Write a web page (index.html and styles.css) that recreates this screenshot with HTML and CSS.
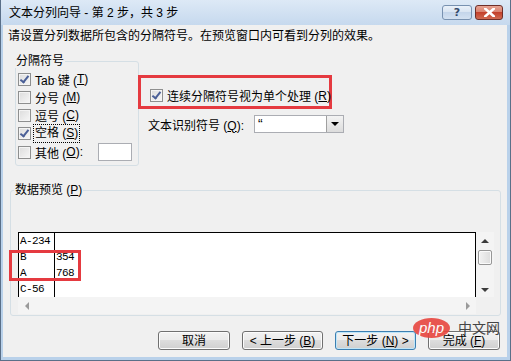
FILE: index.html
```html
<!DOCTYPE html>
<html lang="zh-CN">
<head>
    <meta charset="UTF-8">
    <meta name="viewport" content="width=device-width, initial-scale=1.0">
    <title>文本分列向导</title>
    <link rel="stylesheet" href="styles.css">
</head>
<body>
    <div class="window">
        <div class="titlebar">
            <span class="title">文本分列向导 - 第 2 步，共 3 步</span>
            <div class="caption-buttons">
                <span class="cap-btn help">?</span>
                <span class="cap-btn close">
                    <svg width="11" height="9" viewBox="0 0 11 9">
                        <path d="M1 0.5 L10 8.5 M10 0.5 L1 8.5" stroke="#fff" stroke-width="2.6" stroke-linecap="square"/>
                    </svg>
                </span>
            </div>
        </div>

        <div class="client">
            <p class="intro">请设置分列数据所包含的分隔符号。在预览窗口内可看到分列的效果。</p>

            <div class="options">
                <fieldset class="group delimiters">
                    <legend>分隔符号</legend>
                    <label class="opt"><span class="check on"></span>Tab 键 (<u>T</u>)</label>
                    <label class="opt"><span class="check"></span>分号 (<u>M</u>)</label>
                    <label class="opt"><span class="check"></span>逗号 (<u>C</u>)</label>
                    <label class="opt"><span class="check on"></span><span class="focus">空格 (<u>S</u>)</span></label>
                    <label class="opt other"><span class="check"></span>其他 (<u>O</u>):<span class="textbox"></span></label>
                </fieldset>

                <div class="side">
                    <div class="highlight">
                        <label class="opt"><span class="check on"></span>连续分隔符号视为单个处理 (<u>R</u>)</label>
                    </div>
                    <div class="qualifier">
                        <span class="qualifier-label">文本识别符号 (<u>Q</u>):</span>
                        <div class="combo">
                            <span class="combo-value">“</span>
                            <span class="combo-btn"><span class="tri down"></span></span>
                        </div>
                    </div>
                </div>
            </div>

            <fieldset class="group preview">
                <legend>数据预览 (<u>P</u>)</legend>
                <div class="preview-grid">
                    <div class="sheet">
                        <div class="row"><span class="cell first">A-234</span><span class="cell"></span></div>
                        <div class="row"><span class="cell first">B</span><span class="cell">354</span></div>
                        <div class="row"><span class="cell first">A</span><span class="cell">768</span></div>
                        <div class="row"><span class="cell first">C-56</span><span class="cell"></span></div>
                    </div>
                    <div class="vscroll">
                        <span class="sb-btn"><span class="tri up"></span></span>
                        <span class="thumb"></span>
                        <span class="sb-btn"><span class="tri down"></span></span>
                    </div>
                    <div class="hscroll">
                        <span class="sb-btn"><span class="tri left"></span></span>
                        <span class="sb-btn"><span class="tri right"></span></span>
                    </div>
                    <div class="mark"></div>
                </div>
            </fieldset>

            <div class="buttons">
                <span class="btn narrow">取消</span>
                <span class="btn">&lt; 上一步 (<u>B</u>)</span>
                <span class="btn default">下一步 (<u>N</u>) &gt;</span>
                <span class="btn narrow">完成 (<u>F</u>)</span>
            </div>
        </div>

        <div class="watermark">
            <span class="wm-php">php</span>
            <span class="wm-cn">中文网</span>
        </div>
    </div>
</body>
</html>
```

FILE: styles.css
```css
body {
    margin: 0;
    background: #fff;
    font-family: "Liberation Sans", "Noto Sans CJK SC", sans-serif;
    font-size: 12px;
    color: #000;
}

u {
    text-decoration: underline;
    text-underline-offset: 1px;
}

.window {
    position: relative;
    width: 511px;
    height: 361px;
    box-sizing: border-box;
    display: flex;
    flex-direction: column;
    background: #b9d1ea;
    border: 1px solid #5a6f88;
    border-top: none;
    padding: 0 3px 3px 2px;
}

.titlebar {
    height: 25px;
    margin: 0 -3px 0 -2px;
    display: flex;
    align-items: center;
    justify-content: space-between;
    padding: 0 7px 0 8px;
    background: linear-gradient(#dde9f6, #c6d9ee);
    box-sizing: border-box;
}

.title {
    line-height: 14px;
    padding-top: 1px;
}

.caption-buttons {
    display: flex;
    gap: 3px;
    align-self: flex-start;
    margin-top: 5px;
}

.cap-btn {
    height: 15px;
    box-sizing: border-box;
    border-radius: 3px;
    display: flex;
    align-items: center;
    justify-content: center;
}

.cap-btn.help {
    width: 30px;
    border: 1px solid #7891b0;
    background: linear-gradient(#eaf1f9 0%, #d7e3f1 50%, #c4d5ea 50%, #d3e1f1 100%);
    color: #34496a;
    font-family: "DejaVu Sans", sans-serif;
    font-size: 11px;
    font-weight: bold;
    line-height: 13px;
}

.cap-btn.close {
    width: 28px;
    border: 1px solid #6e2e28;
    background: linear-gradient(#e8a493 0%, #d98270 45%, #c4412c 50%, #d06a52 100%);
}

.client {
    flex: 1;
    background: #f0f0f0;
    padding: 5px 7px 0 5px;
    display: flex;
    flex-direction: column;
}

.intro {
    margin: 0;
    line-height: 13px;
}

.options {
    display: flex;
    margin-top: 11px;
}

.group {
    margin: 0;
    min-width: 0;
    border: 1px solid #d5dfe5;
    border-radius: 3px;
    box-sizing: border-box;
}

.group legend {
    padding: 0 1px;
    line-height: 14px;
}

.delimiters {
    width: 124px;
    margin-left: 7px;
    padding: 2px 0 3px 2px;
}

.delimiters legend {
    margin-left: -3px;
}

.opt {
    display: flex;
    align-items: center;
    height: 18px;
    white-space: nowrap;
}

.opt.other {
    height: 20px;
}

.check {
    position: relative;
    width: 13px;
    height: 13px;
    box-sizing: border-box;
    margin-right: 4px;
    flex: none;
    border: 1px solid #8e8f8f;
    background: linear-gradient(135deg, #dcdcdc, #f7f7f7);
    box-shadow: inset 0 0 0 1px #f4f4f4;
}

.check.on::after {
    content: "";
    position: absolute;
    left: 3px;
    top: 0;
    width: 3px;
    height: 7px;
    border-right: 2px solid #4a5f97;
    border-bottom: 2px solid #4a5f97;
    transform: rotate(38deg);
}

.focus {
    outline: 1px dotted #000;
    outline-offset: 1px;
    line-height: 15px;
}

.textbox {
    width: 34px;
    height: 18px;
    box-sizing: border-box;
    margin-left: auto;
    margin-right: 6px;
    background: #fff;
    border: 1px solid #abadb3;
}

.side {
    margin-top: 21px;
    margin-left: -1px;
}

.highlight {
    width: 194px;
    box-sizing: border-box;
    border: 3px solid #e53a40;
    padding: 11px 0 4px 9px;
}

.highlight .opt {
    height: 13px;
}

.qualifier {
    display: flex;
    align-items: center;
    margin-top: 6px;
    padding-left: 10px;
}

.qualifier-label {
    width: 106px;
}

.combo {
    width: 90px;
    height: 18px;
    box-sizing: border-box;
    display: flex;
    justify-content: space-between;
    background: #fff;
    border: 1px solid #abadb3;
}

.combo-value {
    padding-left: 3px;
    font-size: 14px;
    line-height: 16px;
}

.combo-btn {
    width: 16px;
    display: flex;
    align-items: center;
    justify-content: center;
    border-left: 1px solid #a0a0a0;
    background: linear-gradient(#f3f3f3, #dcdcdc);
}

.tri {
    width: 0;
    height: 0;
    border: 4px solid transparent;
}

.tri.down {
    border-top: 4px solid #000;
    border-bottom: 0;
}

.vscroll .tri.down {
    border-top-color: #3c3c3c;
}

.tri.up {
    border-bottom: 4px solid #3c3c3c;
    border-top: 0;
}

.tri.left {
    border-right: 4px solid #9a9a9a;
    border-left: 0;
}

.tri.right {
    border-left: 4px solid #9a9a9a;
    border-right: 0;
}

.preview {
    width: 491px;
    margin: 17px 0 0 2px;
    padding: 35px 0 1px 7px;
}

.preview legend {
    margin-left: -4px;
}

.preview-grid {
    position: relative;
    display: grid;
    grid-template-columns: 458px 18px;
    grid-template-rows: 65px 17px;
}

.sheet {
    border: 1px solid #000;
    border-bottom: none;
    background: #fff;
    overflow: hidden;
    font-family: "Liberation Mono", monospace;
    font-size: 11px;
    letter-spacing: -0.6px;
}

.row {
    display: flex;
    height: 16px;
    line-height: 17px;
}

.cell {
    padding-left: 1px;
    flex: 1;
}

.cell.first {
    flex: none;
    width: 34px;
    border-right: 1px solid #000;
}

.vscroll {
    display: flex;
    flex-direction: column;
    align-items: center;
    background: #f4f4f4;
}

.vscroll .sb-btn {
    height: 17px;
    width: 18px;
    display: flex;
    align-items: center;
    justify-content: center;
}

.vscroll .sb-btn:last-child {
    margin-top: auto;
    height: 14px;
}

.thumb {
    width: 14px;
    height: 15px;
    margin-top: 1px;
    box-sizing: border-box;
    border: 1px solid #979797;
    border-radius: 2px;
    background: linear-gradient(90deg, #f2f2f2, #dcdcdc);
    box-shadow: inset 0 0 0 1px #fafafa;
}

.hscroll {
    display: flex;
    justify-content: space-between;
    background: #f4f4f4;
}

.hscroll .sb-btn {
    width: 17px;
    display: flex;
    align-items: center;
    justify-content: center;
}

.mark {
    position: absolute;
    left: -9px;
    top: 18px;
    width: 72px;
    height: 31px;
    box-sizing: border-box;
    border: 3px solid #e53a40;
}

.buttons {
    display: flex;
    justify-content: flex-end;
    gap: 12px;
    margin-top: 15px;
}

.btn {
    width: 81px;
    height: 19px;
    box-sizing: border-box;
    border: 1px solid #707070;
    border-radius: 3px;
    padding-top: 2px;
    background: linear-gradient(#f2f2f2 0%, #ebebeb 50%, #dddddd 50%, #cfcfcf 100%);
    box-shadow: inset 0 0 0 1px #fcfcfc;
    text-align: center;
    line-height: 14px;
    white-space: nowrap;
}

.btn.narrow {
    width: 72px;
}

.btn.default {
    border-color: #3c7fb1;
    box-shadow: inset 0 0 0 1px #bfe6f9;
}

.watermark {
    position: absolute;
    left: 412px;
    top: 318px;
    display: flex;
    align-items: flex-start;
    gap: 8px;
    opacity: 0.9;
}

.wm-php {
    width: 37px;
    height: 20px;
    border-radius: 50%;
    background: #e8463f;
    color: #fff;
    font-style: italic;
    font-size: 15px;
    line-height: 19px;
    text-align: center;
}

.wm-cn {
    margin-top: 3px;
    font-family: "Noto Sans CJK SC", sans-serif;
    font-size: 14px;
    line-height: 12px;
    color: #333;
}
```
